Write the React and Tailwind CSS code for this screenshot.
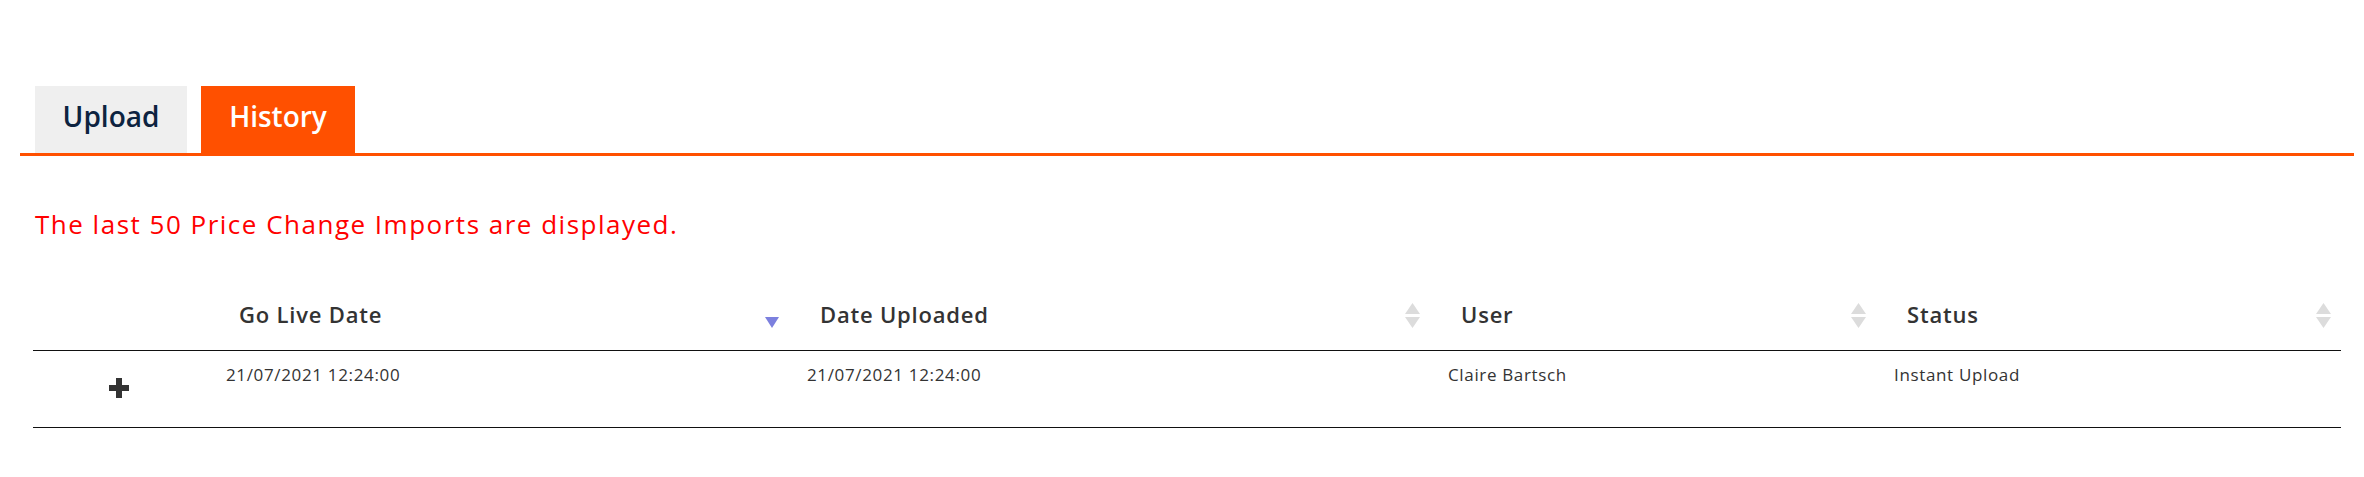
import React from "react";

const font = { fontFamily: '"Open Sans", "Noto Sans", sans-serif' };

function SortBoth() {
  return (
    <svg width="15" height="25" viewBox="0 0 15 25" className="mt-[14px] shrink-0">
      <polygon points="0,11 7.5,0 15,11" fill="#dcdcdc" />
      <polygon points="0,14 15,14 7.5,25" fill="#dcdcdc" />
    </svg>
  );
}

function SortDesc() {
  return (
    <svg width="14" height="11" viewBox="0 0 14 11" className="mt-[28px] shrink-0">
      <polygon points="0,0 14,0 7,11" fill="#7c80de" />
    </svg>
  );
}

function HeaderCell({ label, sort }) {
  return (
    <div className="flex justify-between items-start pl-[31px] pr-[10px] h-[62px] border-b border-[#111]">
      <span className="pt-[10px] text-[22px] leading-[30px] font-semibold tracking-[0.8px] text-[#333]">
        {label}
      </span>
      {sort && (sort === "desc" ? <SortDesc /> : <SortBoth />)}
    </div>
  );
}

function DataCell({ children }) {
  return (
    <div className="pl-[18px] pt-[12px] h-[77px] border-b border-[#111] text-[17px] leading-[24px] tracking-[0.65px] text-[#333]">
      {children}
    </div>
  );
}

export default function App() {
  const row = {
    goLive: "21/07/2021 12:24:00",
    uploaded: "21/07/2021 12:24:00",
    user: "Claire Bartsch",
    status: "Instant Upload",
  };

  return (
    <div className="bg-white w-[2364px] h-[477px] pl-[20px] pr-[10px] pt-[86px]" style={font}>
      <div className="flex gap-[14px] pl-[15px] border-b-[3px] border-[#ff5000]">
        <div className="w-[152px] h-[67px] pt-[11px] bg-[#efefef] text-center text-[28px] leading-[38px] font-semibold text-[#0d2340]">
          Upload
        </div>
        <div className="w-[154px] h-[67px] pt-[11px] bg-[#ff5000] text-center text-[28px] leading-[38px] font-semibold text-white">
          History
        </div>
      </div>

      <p className="mt-[50px] ml-[15px] text-[26px] leading-[36px] tracking-[1.5px] text-[#ff0000]">
        The last 50 Price Change Imports are displayed.
      </p>

      <div className="mt-[47px] ml-[13px] w-[2308px] grid grid-cols-[175px_581px_641px_446px_465px]">
        <HeaderCell label="" />
        <HeaderCell label="Go Live Date" sort="desc" />
        <HeaderCell label="Date Uploaded" sort="both" />
        <HeaderCell label="User" sort="both" />
        <HeaderCell label="Status" sort="both" />

        <div className="h-[77px] border-b border-[#111] flex justify-center pt-[27px] pr-[3px]">
          <svg width="20" height="20" viewBox="0 0 20 20">
            <rect x="7" y="0" width="6" height="20" fill="#333" />
            <rect x="0" y="7" width="20" height="6" fill="#333" />
          </svg>
        </div>
        <DataCell>{row.goLive}</DataCell>
        <DataCell>{row.uploaded}</DataCell>
        <DataCell>{row.user}</DataCell>
        <DataCell>{row.status}</DataCell>
      </div>
    </div>
  );
}
